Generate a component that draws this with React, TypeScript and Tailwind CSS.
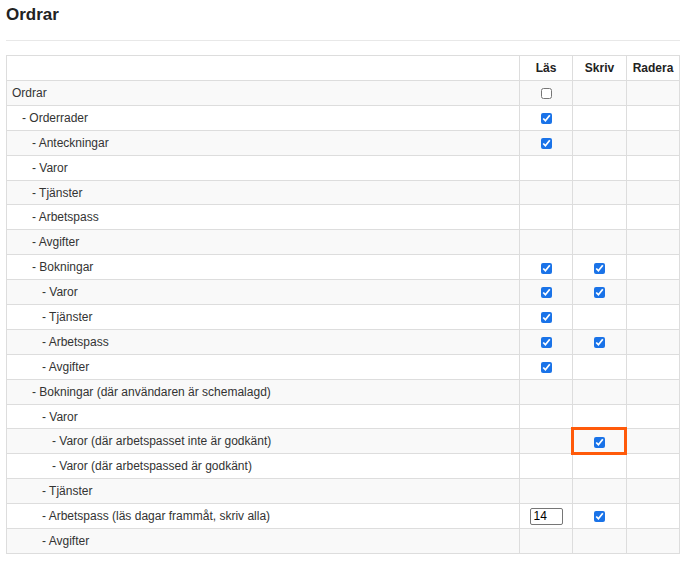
import React from "react";

type Row = {
  label: string;
  level: number;
  read?: boolean | "empty" | "input";
  write?: boolean;
  highlight?: boolean;
};

const rows: Row[] = [
  { label: "Ordrar", level: 0, read: "empty" },
  { label: "- Orderrader", level: 1, read: true },
  { label: "- Anteckningar", level: 2, read: true },
  { label: "- Varor", level: 2 },
  { label: "- Tjänster", level: 2 },
  { label: "- Arbetspass", level: 2 },
  { label: "- Avgifter", level: 2 },
  { label: "- Bokningar", level: 2, read: true, write: true },
  { label: "- Varor", level: 3, read: true, write: true },
  { label: "- Tjänster", level: 3, read: true },
  { label: "- Arbetspass", level: 3, read: true, write: true },
  { label: "- Avgifter", level: 3, read: true },
  { label: "- Bokningar (där användaren är schemalagd)", level: 2 },
  { label: "- Varor", level: 3 },
  { label: "- Varor (där arbetspasset inte är godkänt)", level: 4, write: true, highlight: true },
  { label: "- Varor (där arbetspassed är godkänt)", level: 4 },
  { label: "- Tjänster", level: 3 },
  { label: "- Arbetspass (läs dagar frammåt, skriv alla)", level: 3, read: "input", write: true },
  { label: "- Avgifter", level: 3 },
];

const indent = ["pl-[5px]", "pl-[15px]", "pl-[25px]", "pl-[35px]", "pl-[45px]"];

function Check({ checked }: { checked: boolean }) {
  return (
    <input
      type="checkbox"
      defaultChecked={checked}
      className="w-[11px] h-[11px] m-0 align-middle accent-[#1a73e8]"
    />
  );
}

export default function App() {
  return (
    <div className="font-['Liberation_Sans',Arial,sans-serif] text-[#333] bg-white min-h-[561px]">
      <h1 className="pl-[6px] pt-[3px] text-[17px] font-bold leading-[24px] text-[#222]">Ordrar</h1>
      <div className="ml-[6px] w-[674px] mt-[13px] border-t border-[#e8e8e8]" />
      <table className="ml-[6px] mt-[14px] w-[674px] border-collapse text-[12px] leading-[14px]">
        <thead>
          <tr className="h-[25px]">
            <th className="border border-[#ddd]" />
            <th className="w-[53px] border border-[#ddd] font-bold text-center text-[#222]">Läs</th>
            <th className="w-[54px] border border-[#ddd] font-bold text-center text-[#222]">Skriv</th>
            <th className="w-[53px] border border-[#ddd] font-bold text-center text-[#222]">Radera</th>
          </tr>
        </thead>
        <tbody>
          {rows.map((row, i) => (
            <tr key={i} className={`h-[24.9px] ${i % 2 === 0 ? "bg-[#f9f9f9]" : "bg-white"}`}>
              <td className={`border border-[#ddd] ${indent[row.level]}`}>{row.label}</td>
              <td className="border border-[#ddd] text-center">
                {row.read === "input" ? (
                  <input
                    type="text"
                    defaultValue="14"
                    className="w-[33px] h-[17px] border border-[#767676] rounded-[2px] px-[3px] text-[12px] text-black align-middle bg-white"
                  />
                ) : row.read !== undefined ? (
                  <Check checked={row.read === true} />
                ) : null}
              </td>
              <td className="relative border border-[#ddd] text-center">
                {row.write ? <Check checked /> : null}
                {row.highlight ? (
                  <span className="absolute left-[-2px] right-[-1px] top-[-2px] bottom-[-2px] border-[3px] border-[#ff5a0a]" />
                ) : null}
              </td>
              <td className="border border-[#ddd]" />
            </tr>
          ))}
        </tbody>
      </table>
    </div>
  );
}
